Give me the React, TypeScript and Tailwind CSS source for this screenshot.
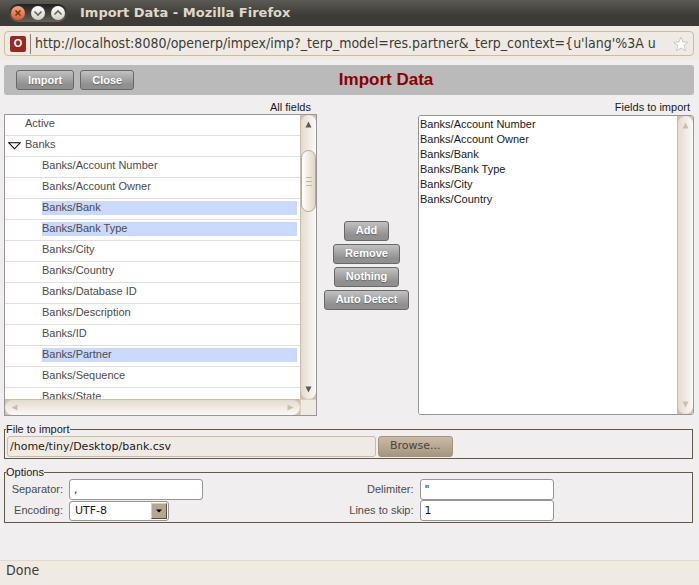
import React, { useState } from "react";

const SANS = "font-['Liberation_Sans',Arial,sans-serif]";
const CONDENSED = "font-['DejaVu_Sans_Condensed','DejaVu_Sans',sans-serif]";

const nestedFields = [
  "Banks/Account Number",
  "Banks/Account Owner",
  "Banks/Bank",
  "Banks/Bank Type",
  "Banks/City",
  "Banks/Country",
  "Banks/Database ID",
  "Banks/Description",
  "Banks/ID",
  "Banks/Partner",
  "Banks/Sequence",
  "Banks/State",
];

const importFields = [
  "Banks/Account Number",
  "Banks/Account Owner",
  "Banks/Bank",
  "Banks/Bank Type",
  "Banks/City",
  "Banks/Country",
];

function ActionButton({ children }: { children: React.ReactNode }) {
  return (
    <button
      type="button"
      className="h-5 rounded-[3px] border border-[#686868] bg-linear-to-b from-[#c2c2c2] to-[#909090] to-75% px-[11px] text-[11px] leading-[17px] font-bold text-white [text-shadow:0_1px_1px_#666]"
    >
      {children}
    </button>
  );
}

type Direction = "up" | "down" | "left" | "right";

const arrowPaths: Record<Direction, string> = {
  up: "M3.5 0.5L6.5 6.5H0.5Z",
  down: "M3.5 6.5L6.5 0.5H0.5Z",
  left: "M0.5 3.5L6.5 0.5V6.5Z",
  right: "M6.5 3.5L0.5 0.5V6.5Z",
};

function Arrow({ direction, muted }: { direction: Direction; muted?: boolean }) {
  return (
    <svg width="7" height="7" viewBox="0 0 7 7" aria-hidden="true">
      <path d={arrowPaths[direction]} fill={muted ? "#c9bfac" : "#5e5a52"} />
    </svg>
  );
}

function VerticalScrollbar({ disabled }: { disabled?: boolean }) {
  return (
    <div className="w-4 shrink-0 border-l border-[#c9bda5] bg-[#cfc4ae]">
      <div className="flex h-full flex-col items-center justify-between rounded-[8px] bg-linear-to-r from-[#e4dbcd] to-[#fbfaf8] py-1.5">
        <Arrow direction="up" muted={disabled} />
        {!disabled && (
          <div className="mb-[152px] flex h-[62px] w-full flex-col items-center justify-center gap-[3px] rounded-[8px] border border-[#b5a88f] bg-linear-to-r from-white to-[#e0d7c7]">
            <span className="h-px w-1.5 bg-[#c2b69f]" />
            <span className="h-px w-1.5 bg-[#c2b69f]" />
            <span className="h-px w-1.5 bg-[#c2b69f]" />
          </div>
        )}
        <Arrow direction="down" muted={disabled} />
      </div>
    </div>
  );
}

function HorizontalScrollbar() {
  return (
    <div className="flex h-4 shrink-0">
      <div className="flex-1 border-t border-[#c9bda5] bg-[#cfc4ae]">
        <div className="flex h-full items-center justify-between rounded-[8px] bg-linear-to-b from-[#e4dbcd] to-[#fbfaf8] px-1.5">
          <Arrow direction="left" muted />
          <Arrow direction="right" muted />
        </div>
      </div>
      <div className="w-4 border-t border-l border-[#d9cfbc] bg-[#efeae2]" />
    </div>
  );
}

function WindowButton({ label, path, close }: { label: string; path: string; close?: boolean }) {
  return (
    <button
      type="button"
      aria-label={label}
      className={
        close
          ? "size-3.5 rounded-full bg-linear-to-b from-[#f9a27f] to-[#e2592a]"
          : "size-3.5 rounded-full bg-linear-to-b from-white to-[#d3cec4]"
      }
    >
      <svg width="14" height="14" viewBox="0 0 14 14" fill="none" aria-hidden="true">
        <path d={path} stroke={close ? "#6b3620" : "#68655e"} strokeWidth="1.6" />
      </svg>
    </button>
  );
}

function TitleBar() {
  return (
    <header className="flex h-[26px] shrink-0 items-center bg-linear-to-b from-[#5c5a54] to-[#3c3b37] to-60% pl-[9px]">
      <div className="flex h-[18px] items-center gap-1.5 rounded-full bg-linear-to-b from-[#22211e] to-[#64625b] px-0.5">
        <WindowButton close label="Close window" path="M4.5 4.5L9.5 9.5M9.5 4.5L4.5 9.5" />
        <WindowButton label="Minimize" path="M3.5 5.5L7 9L10.5 5.5" />
        <WindowButton label="Maximize" path="M3.5 8.5L7 5L10.5 8.5" />
      </div>
      <span className="ml-[13px] font-['DejaVu_Sans',sans-serif] text-[13px] leading-[18px] font-bold text-[#dfd8c8]">
        Import Data - Mozilla Firefox
      </span>
    </header>
  );
}

function AddressBar() {
  const [url, setUrl] = useState(
    "http://localhost:8080/openerp/impex/imp?_terp_model=res.partner&_terp_context={u'lang'%3A u",
  );
  return (
    <div className="shrink-0 bg-[#f0ebe2] pt-[5px] pr-[5px] pb-1 pl-1">
      <div className="flex h-[25px] items-center rounded-[4px] border border-[#c9bda2] bg-[#efebe4] pl-[5px]">
        <span className="flex size-4 shrink-0 items-center justify-center rounded-[2px] bg-[#982820] text-[11px] font-bold text-white">
          O
        </span>
        <span className="ml-1 h-5 w-px shrink-0 bg-[#8a8069]" />
        <input
          aria-label="Address"
          value={url}
          onChange={(e) => setUrl(e.target.value)}
          className={`ml-1 h-5 min-w-0 flex-1 bg-transparent text-[14px] text-[#3c3b37] outline-none ${CONDENSED}`}
        />
        <svg className="mx-1 shrink-0" width="16" height="16" viewBox="0 0 16 16" aria-hidden="true">
          <path
            d="M8 1L10 5.8L15.2 6.2L11.2 9.6L12.5 14.7L8 12L3.5 14.7L4.8 9.6L0.8 6.2L6 5.8Z"
            fill="#fff"
            stroke="#cbc7c0"
          />
        </svg>
      </div>
    </div>
  );
}

function TreeRow({ name, nested, selected }: { name: string; nested?: boolean; selected?: boolean }) {
  return (
    <li
      role="treeitem"
      aria-selected={!!selected}
      className={`h-[21px] border-b border-[#e0e0e0] pt-0.5 pr-[3px] ${nested ? "pl-[37px]" : "pl-5"}`}
    >
      <span className={`block h-3.5 leading-[12px] ${selected ? "bg-[#cbd8ff]" : ""}`}>{name}</span>
    </li>
  );
}

function AllFields() {
  return (
    <section className="min-w-0">
      <h2 id="all-fields" className="pr-1.5 text-right leading-[14px]">
        All fields
      </h2>
      <div className="flex h-[302px] flex-col border border-[#98949a] bg-white">
        <div className="flex min-h-0 flex-1">
          <ul role="tree" aria-labelledby="all-fields" className="min-w-0 flex-1 overflow-hidden text-[#4c4c4c]">
            <TreeRow name="Active" />
            <li role="treeitem" aria-expanded="true" className="flex h-[21px] items-start border-b border-[#e0e0e0] pt-0.5 pl-[3px]">
              <button type="button" aria-label="Collapse Banks" className="mt-1 w-[17px]">
                <svg width="13" height="8" viewBox="0 0 13 8" aria-hidden="true">
                  <path d="M0.8 0.8H12.2L6.5 6.8Z" fill="#fff" stroke="#000" strokeWidth="1.1" />
                </svg>
              </button>
              <span className="leading-[12px]">Banks</span>
            </li>
            {nestedFields.map((name) => (
              <TreeRow
                key={name}
                name={name}
                nested
                selected={["Banks/Bank", "Banks/Bank Type", "Banks/Partner"].includes(name)}
              />
            ))}
          </ul>
          <VerticalScrollbar />
        </div>
        <HorizontalScrollbar />
      </div>
    </section>
  );
}

function FieldsToImport() {
  return (
    <section className="min-w-0">
      <label htmlFor="import-fields" className="block pr-1 text-right leading-[14px]">
        Fields to import
      </label>
      <div className="my-px flex h-[300px] overflow-hidden rounded-[3px] border border-[#98949a] bg-white">
        <select
          id="import-fields"
          multiple
          className="min-w-0 flex-1 appearance-none overflow-hidden bg-white pt-0.5 text-[11px] outline-none"
        >
          {importFields.map((name) => (
            <option key={name} className="h-[15px] px-px py-0 leading-[15px]">
              {name}
            </option>
          ))}
        </select>
        <VerticalScrollbar disabled />
      </div>
    </section>
  );
}

const fieldset = "mt-1.5 mr-px border border-[#645946] pb-px";
const textInput =
  "h-[21px] w-[134px] rounded-[3px] border border-[#98949a] bg-white px-1 font-['DejaVu_Sans',sans-serif] text-[11px] text-[#1a1a1a]";

function OptionInput({ id, label, value, wide }: { id: string; label: string; value: string; wide?: boolean }) {
  return (
    <div className="flex items-center gap-1.5">
      <label
        htmlFor={id}
        className={`text-right whitespace-nowrap text-[#4c4c4c] ${wide ? "w-[65px]" : "w-[58px]"}`}
      >
        {label}
      </label>
      <input id={id} type="text" defaultValue={value} className={textInput} />
    </div>
  );
}

export default function App() {
  return (
    <div className={`flex min-h-screen flex-col bg-[#f0eeef] text-[11px] text-[#1a1a1a] ${SANS}`}>
      <TitleBar />
      <AddressBar />
      <main className="pt-[5px] pr-[5px] pl-1">
        <div className="flex h-[30px] items-center rounded-[3px] bg-[#bababa] pl-3">
          <div className="flex gap-1.5">
            <ActionButton>Import</ActionButton>
            <ActionButton>Close</ActionButton>
          </div>
          <h1 className="flex-1 pr-14 text-center text-[17px] leading-5 font-bold text-[#8b0000]">Import Data</h1>
        </div>

        <div className="mt-[5px] grid grid-cols-[313fr_101px_276fr]">
          <AllFields />
          <div className="flex flex-col items-center justify-center gap-[3px] pt-3.5 pr-0.5">
            <ActionButton>Add</ActionButton>
            <ActionButton>Remove</ActionButton>
            <ActionButton>Nothing</ActionButton>
            <ActionButton>Auto Detect</ActionButton>
          </div>
          <FieldsToImport />
        </div>

        <fieldset className={fieldset}>
          <legend className="ml-px leading-[14px]">File to import</legend>
          <div className="flex gap-0.5 px-0.5 font-['DejaVu_Sans',sans-serif]">
            <input
              type="text"
              aria-label="File to import"
              readOnly
              value="/home/tiny/Desktop/bank.csv"
              className="h-[21px] w-[369px] rounded-[3px] border border-[#c9bda2] bg-[#efebe4] px-0.5"
            />
            <button
              type="button"
              className="h-[21px] rounded-[3px] border border-[#a3937c] bg-linear-to-b from-[#c9bba8] to-[#a6957d] px-[11px] text-[#4a4339]"
            >
              Browse...
            </button>
          </div>
        </fieldset>

        <fieldset className={fieldset}>
          <legend className="ml-px leading-[14px]">Options</legend>
          <div className="grid grid-cols-2">
            <OptionInput id="separator" label="Separator:" value="," />
            <OptionInput id="delimiter" label="Delimiter:" value={'"'} wide />
            <div className="flex items-center gap-1.5">
              <label htmlFor="encoding" className="w-[58px] text-right whitespace-nowrap text-[#4c4c4c]">
                Encoding:
              </label>
              <div className="relative">
                <select
                  id="encoding"
                  className="block h-5 w-[100px] appearance-none rounded-[3px] border border-[#98949a] bg-white pl-[5px] font-['DejaVu_Sans',sans-serif] text-[11px] leading-[18px]"
                >
                  <option>UTF-8</option>
                </select>
                <span className="pointer-events-none absolute top-0.5 right-0.5 flex size-4 items-center justify-center border border-t-[#d8ccb9] border-r-[#5c5040] border-b-[#5c5040] border-l-[#d8ccb9] bg-[#b5a690]">
                  <svg width="6" height="4" viewBox="0 0 6 4" aria-hidden="true">
                    <path d="M0 0.5H6L3 3.5Z" fill="#000" />
                  </svg>
                </span>
              </div>
            </div>
            <OptionInput id="skip" label="Lines to skip:" value="1" wide />
          </div>
        </fieldset>
      </main>
      <footer
        className={`mt-auto h-[25px] border-t border-[#e2d9c7] bg-[#f0ebe2] pl-1.5 text-[14px] leading-[18px] text-[#3c3b37] ${CONDENSED}`}
      >
        Done
      </footer>
    </div>
  );
}
